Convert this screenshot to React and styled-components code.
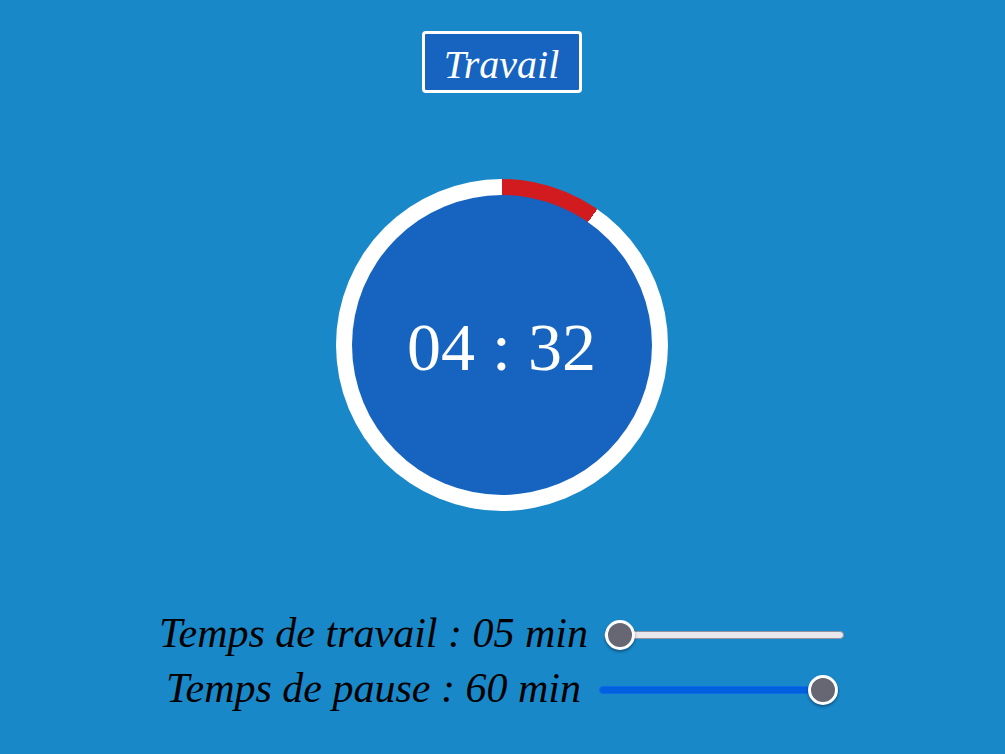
import React, { useState } from "react";
import styled, { createGlobalStyle } from "styled-components";

const GlobalStyle = createGlobalStyle`
  *, *::before, *::after { box-sizing: border-box; }
  body {
    margin: 0;
    background: #1988c9;
    color: #000;
    font-family: "Liberation Serif", "Times New Roman", serif;
  }
`;

const Page = styled.main`
  display: flex;
  flex-direction: column;
  align-items: center;
  min-height: 100vh;
  padding: 31px 18px 30px 16px;
`;

const ModeButton = styled.button`
  width: 160px;
  height: 62px;
  padding: 6px 0 0;
  border: 3px solid #fff;
  border-radius: 4px;
  background: #1664c0;
  color: #fff;
  font: italic 40px/48px "Liberation Serif", "Times New Roman", serif;
  cursor: pointer;
`;

const Dial = styled.section`
  display: grid;
  width: 332px;
  height: 332px;
  margin: 86px 0 94px;
  padding: 16px;
  border-radius: 50%;
  background: conic-gradient(#d11b1e ${(p) => p.$angle}deg, #fff ${(p) => p.$angle}deg);
`;

const Face = styled.div`
  display: grid;
  place-items: center;
  padding-top: 4px;
  border-radius: 50%;
  background: #1664c0;
`;

const Time = styled.time`
  color: #fff;
  font-size: 68px;
  line-height: 80px;
  white-space: pre;
`;

const Settings = styled.form`
  display: flex;
  flex-direction: column;
`;

const Row = styled.div`
  display: flex;
  align-items: center;
  justify-content: center;
  gap: 16px;
  height: 55px;
`;

const Label = styled.label`
  min-width: 420px;
  font-size: 42px;
  font-style: italic;
  line-height: 48px;
  text-align: center;
  white-space: nowrap;
`;

const Slider = styled.input`
  appearance: none;
  width: 240px;
  height: 8px;
  margin: 4px 0 0;
  border: 1px solid ${(p) => (p.$filled ? "#0b6bea" : "#93929e")};
  border-radius: 4px;
  background: ${(p) => (p.$filled ? "#0060df" : "#e9e9ed")};
  cursor: pointer;

  &::-webkit-slider-thumb {
    appearance: none;
    width: 30px;
    height: 30px;
    border: 3px solid #fff;
    border-radius: 50%;
    background: #676774;
    box-shadow: 0 2px 3px rgba(0, 0, 0, 0.35);
  }
`;

const pad = (n) => String(n).padStart(2, "0");

function DurationSetting({ id, label, value, onChange }) {
  return (
    <Row>
      <Label htmlFor={id}>{`${label} : ${pad(value)} min`}</Label>
      <Slider
        id={id}
        type="range"
        min="5"
        max="60"
        step="5"
        value={value}
        $filled={value > 5}
        onChange={(e) => onChange(Number(e.target.value))}
      />
    </Row>
  );
}

export default function App() {
  const [work, setWork] = useState(5);
  const [rest, setRest] = useState(60);
  return (
    <>
      <GlobalStyle />
      <Page>
        <ModeButton type="button">Travail</ModeButton>
        <Dial $angle={35}>
          <Face>
            <Time>04 : 32</Time>
          </Face>
        </Dial>
        <Settings>
          <DurationSetting id="work" label="Temps de travail" value={work} onChange={setWork} />
          <DurationSetting id="rest" label="Temps de pause" value={rest} onChange={setRest} />
        </Settings>
      </Page>
    </>
  );
}
